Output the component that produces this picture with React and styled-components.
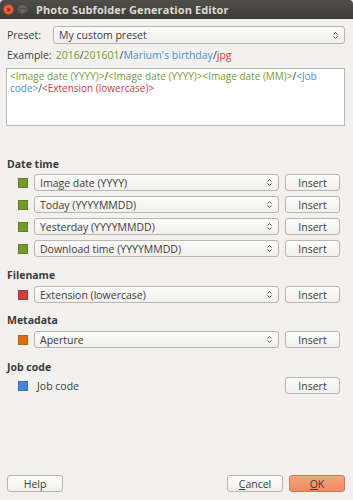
import React from 'react';
import styled, { createGlobalStyle } from 'styled-components';

const Global = createGlobalStyle`
  html, body { margin: 0; padding: 0; }
  body {
    background: #f2f1f0;
    font-family: 'Open Sans', 'DejaVu Sans', sans-serif;
    font-size: 10.5px;
    color: #3c3c3c;
  }
`;

const Window = styled.div`
  width: 353px;
  height: 500px;
  display: flex;
  flex-direction: column;
  background: #f2f1f0;
  overflow: hidden;
`;

const TitleBar = styled.div`
  height: 19px;
  display: flex;
  align-items: center;
  padding-left: 3px;
  gap: 3px;
  background: linear-gradient(#4f4e49, #3c3b37);
  border-radius: 4px 4px 0 0;
`;

const Dot = styled.div`
  width: 11px;
  height: 11px;
  border-radius: 50%;
  background: ${(p) => p.bg};
  border: 1px solid ${(p) => p.edge};
  box-sizing: border-box;
  display: flex;
  align-items: center;
  justify-content: center;
  color: ${(p) => p.fg};
  font-size: 8px;
  font-weight: bold;
  line-height: 1;
`;

const Title = styled.div`
  margin-left: 5px;
  color: #dfdbd2;
  font-weight: bold;
  font-size: 11px;
  letter-spacing: 0.1px;
`;

const Body = styled.div`
  flex: 1;
  display: flex;
  flex-direction: column;
  padding: 7px 8px 8px 7px;
`;

const PresetRow = styled.div`
  display: flex;
  align-items: center;
  height: 18px;
`;

const Label = styled.div`
  width: 46px;
  flex: none;
`;

const Combo = styled.div`
  flex: 1;
  height: ${(p) => p.h || 18}px;
  box-sizing: border-box;
  border: 1px solid #b9b6b1;
  border-radius: 3px;
  background: linear-gradient(#fbfbfa, #f1f0ef);
  display: flex;
  align-items: center;
  padding: 0 6px 0 5px;
  color: #3c3c3c;
`;

const ComboText = styled.span`
  flex: 1;
`;

const Arrows = () => (
  <svg width="5" height="9" viewBox="0 0 5 9">
    <path d="M0.5 3.5 L2.5 1.5 L4.5 3.5" fill="none" stroke="#555" strokeWidth="1" />
    <path d="M0.5 5.5 L2.5 7.5 L4.5 5.5" fill="none" stroke="#555" strokeWidth="1" />
  </svg>
);

const ExampleRow = styled.div`
  margin-top: 3px;
  height: 15px;
  display: flex;
  align-items: center;
  gap: 4px;
`;

const C = styled.span`
  color: ${(p) => p.c};
`;

const TextBox = styled.div`
  margin-top: 6px;
  margin-left: -1px;
  height: 58px;
  box-sizing: border-box;
  border: 1px solid #b9b6b1;
  background: #ffffff;
  padding: 1px 3px;
  line-height: 12px;
  font-size: 10px;
`;

const Heading = styled.div`
  font-weight: bold;
  margin-top: ${(p) => p.mt}px;
  height: 14px;
  line-height: 14px;
`;

const Row = styled.div`
  display: flex;
  align-items: center;
  height: 17px;
  margin-top: ${(p) => p.mt || 5}px;
  padding: 0 5px 0 11px;
`;

const Swatch = styled.div`
  width: 10px;
  height: 10px;
  flex: none;
  background: ${(p) => p.c};
  border: 1px solid rgba(0, 0, 0, 0.15);
  box-sizing: border-box;
  margin-right: 6px;
`;

const Spacer = styled.div`
  flex: 1;
  padding-left: 3px;
`;

const Button = styled.div`
  width: ${(p) => p.w || 55}px;
  height: ${(p) => p.h || 17}px;
  box-sizing: border-box;
  flex: none;
  margin-left: ${(p) => p.ml ?? 6}px;
  border: 1px solid ${(p) => (p.primary ? '#d8764e' : '#b9b6b1')};
  border-radius: 3px;
  background: ${(p) =>
    p.primary ? 'linear-gradient(#f6a57f, #ef8b60)' : 'linear-gradient(#fdfdfc, #f1f0ee)'};
  display: flex;
  align-items: center;
  justify-content: center;
  color: #3c3c3c;
`;

const Mnemonic = styled.span`
  text-decoration: underline;
`;

const Footer = styled.div`
  margin-top: auto;
  display: flex;
  align-items: center;
`;

const GREEN = '#749a2c';
const GREEN_T = '#7b9c2f';
const BLUE = '#4a8fd8';
const RED = '#d2413a';

function Field({ color, text, mt, noCombo }) {
  return (
    <Row mt={mt}>
      <Swatch c={color} />
      {noCombo ? (
        <Spacer>{text}</Spacer>
      ) : (
        <Combo h={17}>
          <ComboText>{text}</ComboText>
          <Arrows />
        </Combo>
      )}
      <Button>Insert</Button>
    </Row>
  );
}

export default function App() {
  return (
    <Window>
      <Global />
      <TitleBar>
        <Dot bg="#e9623a" edge="#a8442a" fg="#6b2412">×</Dot>
        <Dot bg="#65645f" edge="#4a4945" fg="#3c3b37">□</Dot>
        <Title>Photo Subfolder Generation Editor</Title>
      </TitleBar>
      <Body>
        <PresetRow>
          <Label>Preset:</Label>
          <Combo>
            <ComboText>My custom preset</ComboText>
            <Arrows />
          </Combo>
        </PresetRow>
        <ExampleRow>
          <span>Example:</span>
          <span>
            <C c={GREEN_T}>2016</C>/<C c={GREEN_T}>201601</C>/<C c={BLUE}>Marium's birthday</C>/
            <C c={RED}>jpg</C>
          </span>
        </ExampleRow>
        <TextBox>
          <C c={GREEN_T}>&lt;Image date (YYYY)&gt;</C>/<C c={GREEN_T}>&lt;Image date (YYYY)&gt;&lt;Image date (MM)&gt;</C>/
          <C c={BLUE}>&lt;Job code&gt;</C>/<C c={RED}>&lt;Extension (lowercase)&gt;</C>
        </TextBox>

        <Heading mt={31}>Date time</Heading>
        <Field color={GREEN} text="Image date (YYYY)" mt={3} />
        <Field color={GREEN} text="Today (YYYYMMDD)" />
        <Field color={GREEN} text="Yesterday (YYYYMMDD)" />
        <Field color={GREEN} text="Download time (YYYYMMDD)" />

        <Heading mt={11}>Filename</Heading>
        <Field color="#cc4039" text="Extension (lowercase)" mt={4} />

        <Heading mt={10}>Metadata</Heading>
        <Field color="#d8700f" text="Aperture" mt={4} />

        <Heading mt={12}>Job code</Heading>
        <Field color="#3f86dc" text="Job code" mt={3} noCombo />

        <Footer>
          <Button w={56} ml={0}>Help</Button>
          <div style={{ flex: 1 }} />
          <Button w={56} ml={0}>
            <Mnemonic>C</Mnemonic>ancel
          </Button>
          <Button w={56} primary>
            <Mnemonic>O</Mnemonic>K
          </Button>
        </Footer>
      </Body>
    </Window>
  );
}
